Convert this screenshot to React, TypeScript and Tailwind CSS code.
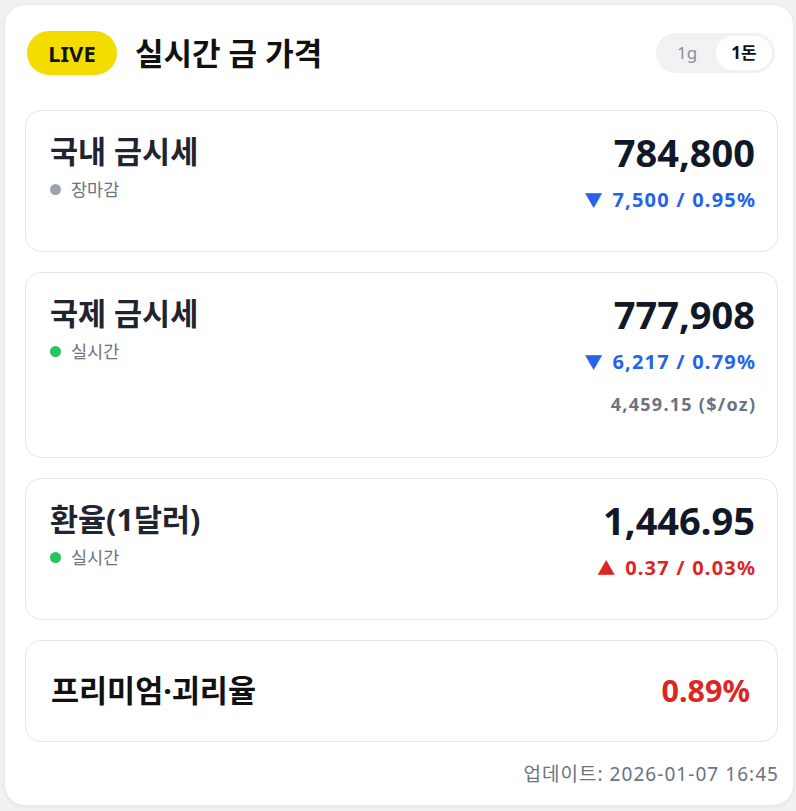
const FONT = { fontFamily: '"Noto Sans", "Noto Sans CJK KR", sans-serif' };

type Row = {
  title: string;
  status: string;
  live: boolean;
  price: string;
  change: string;
  up: boolean;
  sub?: string;
};

const rows: Row[] = [
  { title: "국내 금시세", status: "장마감", live: false, price: "784,800", change: "7,500 / 0.95%", up: false },
  { title: "국제 금시세", status: "실시간", live: true, price: "777,908", change: "6,217 / 0.79%", up: false, sub: "4,459.15 ($/oz)" },
  { title: "환율(1달러)", status: "실시간", live: true, price: "1,446.95", change: "0.37 / 0.03%", up: true },
];

function PriceCard({ row }: { row: Row }) {
  return (
    <div className="flex items-start justify-between rounded-2xl border border-[#e6e7ea] bg-white pl-6 pr-[22px] pt-[20px] pb-[37px]">
      <div>
        <h3 className="text-[30.5px] leading-[40px] font-bold text-[#1f2430]">{row.title}</h3>
        <div className="mt-[6px] flex items-center gap-[10px] text-[17.5px] leading-6 text-[#6b7280]">
          <span className={`h-[11px] w-[11px] rounded-full ${row.live ? "bg-[#22c55e]" : "bg-[#9ca3af]"}`} />
          {row.status}
        </div>
      </div>
      <div className="flex flex-col items-end whitespace-nowrap">
        <div className="-mt-[2px] text-[38px] leading-[46px] font-bold text-[#111827]">{row.price}</div>
        <div className={`mt-[11px] flex items-center gap-[10px] text-[20px] leading-[28px] font-bold tracking-[0.06em] ${row.up ? "text-[#dc2626]" : "text-[#2563eb]"}`}>
          <span className="text-[18px] tracking-normal">{row.up ? "▲" : "▼"}</span>
          <span className="-mr-[0.06em]">{row.change}</span>
        </div>
        {row.sub && (
          <div className="mt-[15px] mb-[3px] text-[18px] leading-[26px] font-bold tracking-[0.07em] text-[#6b7280]">
            <span className="-mr-[0.07em]">{row.sub}</span>
          </div>
        )}
      </div>
    </div>
  );
}

export default function App() {
  return (
    <div className="min-h-screen bg-[#f1f1f2] p-[5px] pr-[3px]" style={FONT}>
      <div className="rounded-[20px] bg-white pl-5 pr-[15px] pt-[26px] pb-[17px] shadow-[0_1px_4px_rgba(0,0,0,0.08)]">
        <div className="flex items-center justify-between pl-[2px]">
          <div className="flex items-center gap-[18px]">
            <span className="flex h-[44px] w-[90px] items-center justify-center rounded-full bg-[#f5dc00] text-[22px] font-bold text-[#111]">
              LIVE
            </span>
            <h2 className="text-[31px] leading-[44px] font-bold text-[#111]">실시간 금 가격</h2>
          </div>
          <div className="mr-[3px] flex items-center gap-[1px] rounded-full bg-[#f1f2f4] p-[3px]">
            <span className="w-[56px] py-[4px] text-center text-[17px] text-[#8a8f98]">1g</span>
            <span className="w-[56px] rounded-full bg-white py-[4px] text-center text-[17px] font-bold text-[#111]">1돈</span>
          </div>
        </div>

        <div className="mt-[35px] flex flex-col gap-5">
          {rows.map((r) => (
            <PriceCard key={r.title} row={r} />
          ))}
          <div className="flex h-[102px] items-center justify-between rounded-2xl border border-[#e6e7ea] bg-white pl-[25px] pr-[27px]">
            <span className="text-[30.5px] font-bold text-[#111]">프리미엄·괴리율</span>
            <span className="text-[30.5px] font-bold text-[#dc2626]">0.89%</span>
          </div>
        </div>

        <div className="mt-[18px] text-right text-[19px] leading-[28px] tracking-[0.055em] text-[#6b7280]">
          <span className="-mr-[0.055em]">업데이트: 2026-01-07 16:45</span>
        </div>
      </div>
    </div>
  );
}
